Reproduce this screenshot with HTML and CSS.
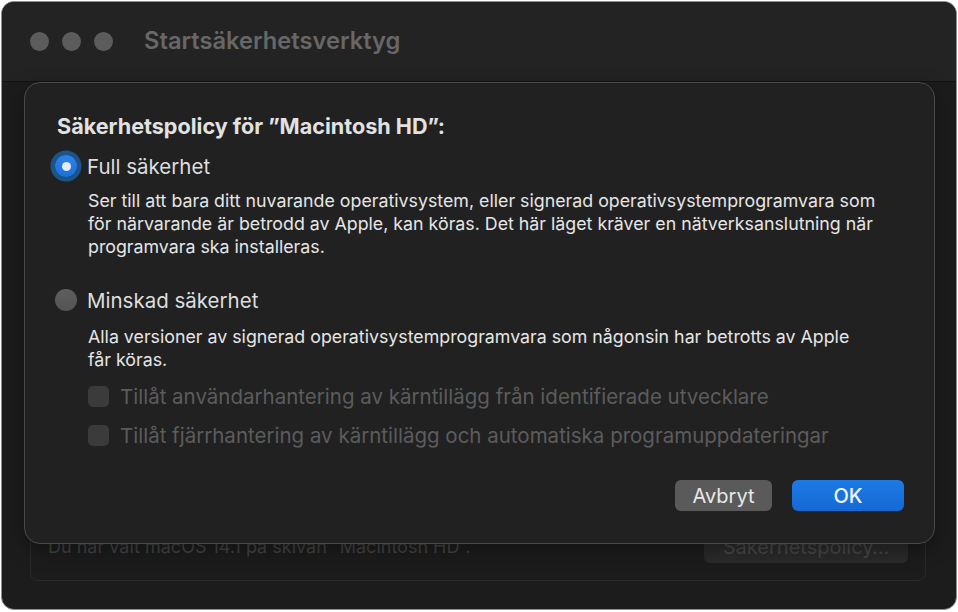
FILE: index.html
```html
<!DOCTYPE html>
<html lang="sv">
<head>
<meta charset="utf-8">
<title>Startsäkerhetsverktyg</title>
<link rel="stylesheet" href="styles.css">
</head>
<body>
<div class="window">
  <div class="titlebar">
    <div class="lights">
      <span class="light"></span><span class="light"></span><span class="light"></span>
    </div>
    <div class="title">Startsäkerhetsverktyg</div>
  </div>
  <div class="content">
    <div class="panel">
      <div class="panel-row">
        <span class="panel-text">Du har valt macOS 14.1 på skivan ”Macintosh HD”.</span>
        <span class="panel-btn">Säkerhetspolicy…</span>
      </div>
    </div>
  </div>

  <div class="sheet">
    <div class="heading">Säkerhetspolicy för ”Macintosh HD”:</div>

    <div class="option opt1">
      <span class="radio on"><span class="dot"></span></span>
      <span class="opt-label">Full säkerhet</span>
    </div>
    <div class="desc desc1">Ser till att bara ditt nuvarande operativsystem, eller signerad operativsystemprogramvara som för närvarande är betrodd av Apple, kan köras. Det här läget kräver en nätverksanslutning när programvara ska installeras.</div>

    <div class="option opt2">
      <span class="radio"></span>
      <span class="opt-label">Minskad säkerhet</span>
    </div>
    <div class="desc desc2">Alla versioner av signerad operativsystemprogramvara som någonsin har betrotts av Apple får köras.</div>

    <div class="check chk1">
      <span class="box"></span>
      <span class="check-label">Tillåt användarhantering av kärntillägg från identifierade utvecklare</span>
    </div>
    <div class="check chk2">
      <span class="box"></span>
      <span class="check-label">Tillåt fjärrhantering av kärntillägg och automatiska programuppdateringar</span>
    </div>

    <div class="buttons">
      <span class="btn btn-cancel">Avbryt</span>
      <span class="btn btn-ok">OK</span>
    </div>
  </div>
</div>
</body>
</html>
```
FILE: styles.css
```css
* { box-sizing: border-box; }
html, body { margin: 0; padding: 0; }
body {
  background: #ffffff;
  width: 958px;
  height: 612px;
  font-family: Inter, "Noto Sans", "Liberation Sans", sans-serif;
  overflow: hidden;
}
.window {
  position: relative;
  margin: 1px 0 0 1px;
  width: 956px;
  height: 609px;
  border-radius: 13px;
  border: 1px solid #8e8e8e;
  background: #1c1c1c;
  overflow: hidden;
}
.titlebar {
  height: 80px;
  background: #232323;
  border-bottom: 1px solid #121212;
  display: flex;
  align-items: center;
  padding-left: 28px;
}
.lights { display: flex; gap: 13px; }
.light {
  width: 19px; height: 19px; border-radius: 50%;
  background: #5c5c5c;
  display: block;
}
.title {
  margin-left: 31px;
  font-size: 23.7px;
  font-weight: 600;
  color: #676767;
  margin-bottom: 2px;
}
.content {
  padding: 20px 30px 0 28px;
}
.panel {
  height: 479px;
  border: 1px solid #2a2a2a;
  border-radius: 8px;
  display: flex;
  flex-direction: column;
  justify-content: flex-end;
  padding: 0 17px 17px 17px;
}
.panel-row {
  display: flex;
  justify-content: space-between;
  align-items: center;
}
.panel-text { font-size: 18px; color: #434343; }
.panel-btn {
  width: 204px; height: 33px;
  border-radius: 6px;
  background: #2a2a2a;
  color: #474747;
  font-size: 20px;
  display: flex; align-items: center; justify-content: center;
}

.sheet {
  position: absolute;
  left: 22px; top: 80px;
  width: 911px; height: 462px;
  background: #212121;
  border: 1px solid #4a4a4a;
  border-radius: 16px;
  box-shadow: 0 6px 20px rgba(0,0,0,0.35);
  padding: 32px 0 0 32px;
  display: flex;
  flex-direction: column;
}
.heading {
  font-size: 21.6px;
  font-weight: 650;
  line-height: 22px;
  color: #e2e2e2;
}
.option {
  display: flex;
  align-items: center;
  height: 30px;
}
.opt1 { margin-top: 14px; }
.opt2 { margin-top: 27px; }
.radio {
  width: 22px; height: 22px; border-radius: 50%;
  margin-left: -2px;
  background: linear-gradient(#5e5e5e, #545454);
  display: flex; align-items: center; justify-content: center;
  flex: none;
}
.radio.on {
  background: linear-gradient(#2d82ea, #1d6fd8);
  box-shadow: 0 0 0 4.5px #1b5488;
}
.dot { width: 9px; height: 9px; border-radius: 50%; background: #e4ecf8; }
.opt-label {
  margin-left: 10px;
  font-size: 20.5px;
  color: #dedede;
}
.desc {
  margin-left: 31px;
  width: 800px;
  font-size: 17.8px;
  line-height: 23px;
  color: #e6e6e6;
}
.desc1 { margin-top: 8px; }
.desc2 { margin-top: 10px; width: 780px; }
.check {
  display: flex;
  align-items: center;
  height: 30px;
  margin-left: 31px;
}
.chk1 { margin-top: 10px; }
.chk2 { margin-top: 9px; }
.box {
  width: 21px; height: 21px;
  border-radius: 5px;
  background: #3b3b3b;
  flex: none;
}
.check-label {
  margin-left: 11px;
  font-size: 20.5px;
  color: #5c5c5c;
}
.buttons {
  margin-top: 30px;
  align-self: flex-end;
  margin-right: 30px;
  display: flex;
  gap: 20px;
}
.btn {
  height: 31px;
  border-radius: 6px;
  font-size: 20px;
  display: flex; align-items: center; justify-content: center;
  color: #e8e8e8;
}
.btn-cancel { width: 97px; background: #5a5a5a; }
.btn-ok { width: 112px; background: linear-gradient(#1c7ae6, #1669d4); color: #f2f6fc; font-weight: 500; }
```
